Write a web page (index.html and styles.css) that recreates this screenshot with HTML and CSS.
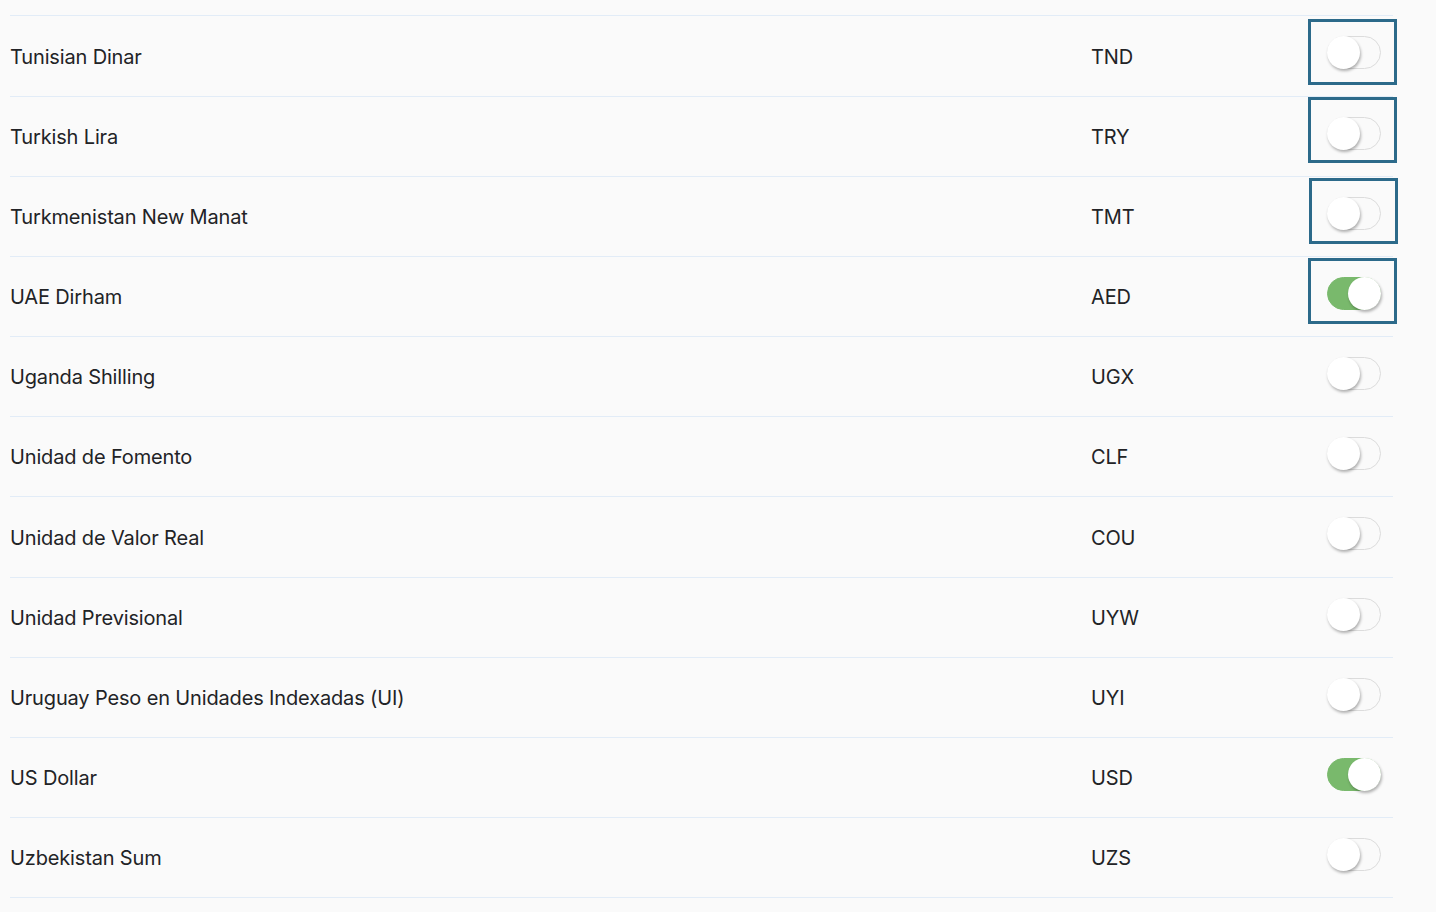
FILE: index.html
```html
<!DOCTYPE html>
<html lang="en">
<head>
    <meta charset="UTF-8">
    <meta name="viewport" content="width=device-width, initial-scale=1.0">
    <title>Currencies</title>
    <link rel="stylesheet" href="styles.css">
</head>
<body>
    <div class="list">
        <div class="row">
            <div class="name">Tunisian Dinar</div>
            <div class="code">TND</div>
            <div class="switch-cell focused"><span class="switch"><span class="knob"></span></span></div>
        </div>
        <div class="row">
            <div class="name">Turkish Lira</div>
            <div class="code">TRY</div>
            <div class="switch-cell focused high"><span class="switch"><span class="knob"></span></span></div>
        </div>
        <div class="row">
            <div class="name">Turkmenistan New Manat</div>
            <div class="code">TMT</div>
            <div class="switch-cell focused mid shifted"><span class="switch"><span class="knob"></span></span></div>
        </div>
        <div class="row">
            <div class="name">UAE Dirham</div>
            <div class="code">AED</div>
            <div class="switch-cell focused mid"><span class="switch on"><span class="knob"></span></span></div>
        </div>
        <div class="row">
            <div class="name">Uganda Shilling</div>
            <div class="code">UGX</div>
            <div class="switch-cell"><span class="switch"><span class="knob"></span></span></div>
        </div>
        <div class="row">
            <div class="name">Unidad de Fomento</div>
            <div class="code">CLF</div>
            <div class="switch-cell"><span class="switch"><span class="knob"></span></span></div>
        </div>
        <div class="row">
            <div class="name">Unidad de Valor Real</div>
            <div class="code">COU</div>
            <div class="switch-cell"><span class="switch"><span class="knob"></span></span></div>
        </div>
        <div class="row">
            <div class="name">Unidad Previsional</div>
            <div class="code">UYW</div>
            <div class="switch-cell"><span class="switch"><span class="knob"></span></span></div>
        </div>
        <div class="row">
            <div class="name">Uruguay Peso en Unidades Indexadas (UI)</div>
            <div class="code">UYI</div>
            <div class="switch-cell"><span class="switch"><span class="knob"></span></span></div>
        </div>
        <div class="row">
            <div class="name">US Dollar</div>
            <div class="code">USD</div>
            <div class="switch-cell"><span class="switch on"><span class="knob"></span></span></div>
        </div>
        <div class="row">
            <div class="name">Uzbekistan Sum</div>
            <div class="code">UZS</div>
            <div class="switch-cell"><span class="switch"><span class="knob"></span></span></div>
        </div>
    </div>
</body>
</html>
```

FILE: styles.css
```css
* {
    margin: 0;
    padding: 0;
    box-sizing: border-box;
}
body {
    background: #fafafa;
    color: #222326;
    font-family: Inter, "Liberation Sans", Arial, sans-serif;
    font-size: 20px;
    letter-spacing: -0.15px;
    padding: 15px 43px 0 10px;
    overflow: hidden;
    height: 100vh;
}
.list {
    border-top: 1px solid #e2ecf7;
}
.row {
    display: flex;
    align-items: center;
    height: 80.1px;
    border-bottom: 1px solid #e2ecf7;
    padding-top: 1px;
}
.row:first-child {
    height: 81px;
    padding-top: 1px;
}
.name {
    flex: 1;
}
.code {
    width: 220px;
}
.switch-cell {
    width: 83px;
    height: 60px;
    margin-right: -1px;
    align-self: flex-start;
    margin-top: 5px;
    padding: 14px 0 0 16px;
}
.switch-cell.focused {
    outline: 3px solid #2c6a8a;
}
.switch-cell.high {
    margin-top: 2px;
    padding-top: 17px;
}
.switch-cell.mid {
    margin-top: 3px;
    padding-top: 16px;
}
.switch-cell.shifted {
    margin-left: 1px;
    margin-right: -2px;
    padding-left: 15px;
}
.switch {
    display: block;
    position: relative;
    width: 54px;
    height: 33px;
    border-radius: 17px;
    border: 1px solid #dcdcdc;
    background: #fafafa;
}
.switch.on {
    background: #79b96c;
    border-color: #79b96c;
}
.knob {
    position: absolute;
    top: -1px;
    left: -1px;
    width: 33px;
    height: 33px;
    border-radius: 50%;
    background: #fff;
    box-shadow: 1px 2px 3px rgba(0, 0, 0, 0.3);
}
.switch.on .knob {
    left: 20px;
}
```
